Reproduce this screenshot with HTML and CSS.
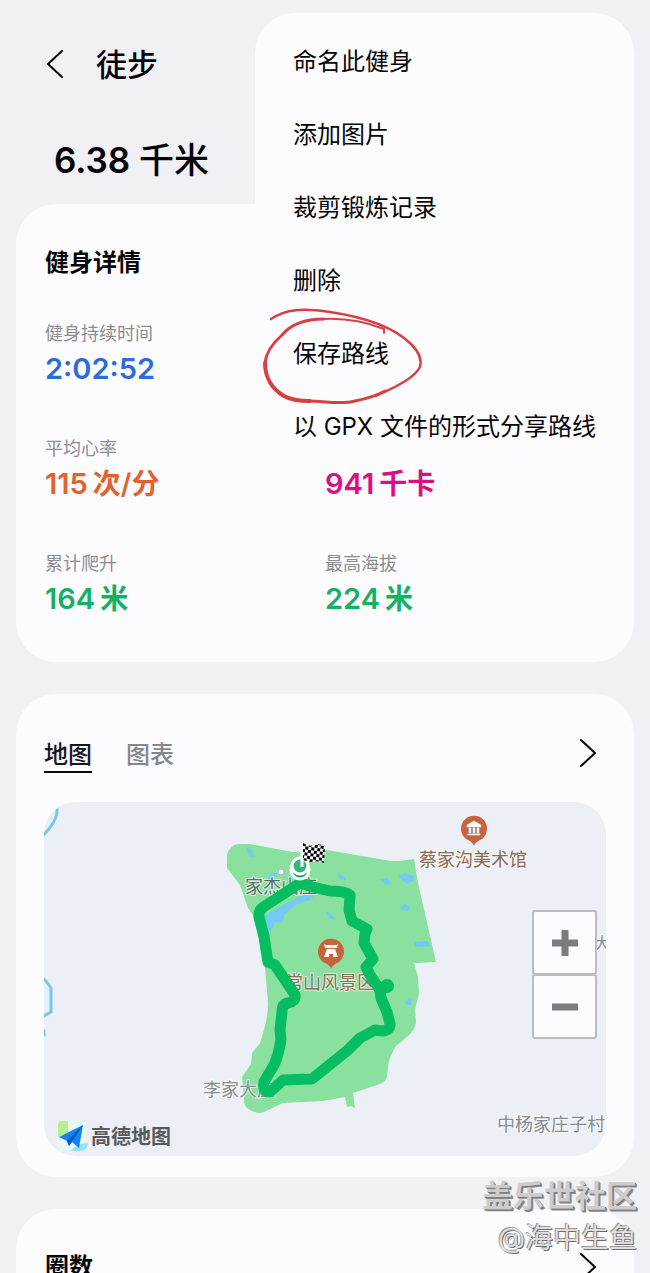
FILE: index.html
```html
<!DOCTYPE html>
<html lang="zh-CN">
<head>
<meta charset="utf-8">
<meta name="viewport" content="width=device-width, initial-scale=1">
<title>徒步</title>
<link rel="stylesheet" href="styles.css">
</head>
<body>
<div class="app">
  <header class="topbar">
    <button class="icon-button" type="button" aria-label="返回">
      <svg class="chevron" viewBox="0 0 18 30" aria-hidden="true"><path d="M16 2 2 15 16 28"/></svg>
    </button>
    <h1 class="title">徒步</h1>
  </header>
  <p class="distance">6.38 <span class="distance-unit">千米</span></p>

  <main class="cards">
    <section class="card details">
      <h2 class="heading">健身详情</h2>
      <dl class="stats">
        <div class="stat stat-wide"><dt>健身持续时间</dt><dd class="blue">2:02:52</dd></div>
        <div class="stat"><dt>平均心率</dt><dd class="orange">115<span class="unit">次/分</span></dd></div>
        <div class="stat"><dt></dt><dd class="pink">941<span class="unit">千卡</span></dd></div>
        <div class="stat"><dt>累计爬升</dt><dd class="green">164<span class="unit">米</span></dd></div>
        <div class="stat"><dt>最高海拔</dt><dd class="green">224<span class="unit">米</span></dd></div>
      </dl>
    </section>

    <section class="card map-card">
      <div class="card-head">
        <div class="tabs">
          <button class="tab tab-active" type="button">地图</button>
          <button class="tab" type="button">图表</button>
        </div>
        <button class="icon-button" type="button" aria-label="打开地图">
          <svg class="chevron" viewBox="0 0 18 30" aria-hidden="true"><path d="M2 2 16 15 2 28"/></svg>
        </button>
      </div>
      <div class="map">
        <svg class="map-canvas" viewBox="44 802 562 354">
          <defs>
            <pattern id="checks" width="6" height="6" patternUnits="userSpaceOnUse" patternTransform="translate(303 843) rotate(8)">
              <rect width="6" height="6" fill="#fff"/><rect width="3" height="3"/><rect x="3" y="3" width="3" height="3"/>
            </pattern>
          </defs>
          <path class="river" d="M40 800H57V812Q56 824 40 838Z"/>
          <path class="river" d="M40 976 46 981 51 988V1012L44 1016H40Z"/>
          <path class="river" d="M42 1031H44V1035H42Z"/>
          <path class="park" d="M227 868V855Q230 845 238 844H250L293 852 327 850 391 861H399L414 859 418 883 436 962 414 963 418 977 419 993 415 1010 416 1022Q415 1030 408 1036L395 1047 389 1060 387 1076Q386 1082 380 1084L353 1093 355 1108 351 1106 347 1107 345 1097 323 1101 283 1103 264 1112Q257 1115 247 1108 243 1104 244 1097L242 1077 251 1064 252 1053 260 1043Q268 1020 268 1003L265 967 253 915 248 908 240 885Z"/>
          <g class="water">
            <path d="M265 915 300 896 315 894 310 900 297 904 285 914 282 923 275 922 271 932 266 926Z"/>
            <path d="M246 847 252 850 255 857 249 856ZM268 877 273 873 277 873 274 878 268 880ZM338 873 346 878 345 881 339 879ZM380 879 387 878 391 883 386 885ZM398 876 405 873 414 876 413 881 407 884 402 880ZM400 907 405 904 410 907 408 911 401 910ZM414 942 427 941 431 946 415 947ZM325 911 331 914 336 920 329 918ZM404 1001 411 999 412 1005 407 1005Z"/>
          </g>
          <g class="places">
            <text class="place-park" x="245" y="893">家杰山庄</text>
            <text class="place-poi" x="285" y="989">常山风景区</text>
            <text class="place" x="203" y="1096">李家大庄</text>
            <text class="place-poi" x="419" y="866">蔡家沟美术馆</text>
            <text class="place" x="497" y="1131">中杨家庄子村</text>
            <text class="place place-small" x="594" y="949">大</text>
          </g>
          <circle cx="281" cy="872" r="3" fill="#fff" stroke="#a9b4cc"/>
          <path class="route" d="M300 883 285 893 265 906Q258 910 259 917L264 936 266 950 268 962 275 965 285 980Q288 984 295 995 296 1001 288 1003 282 1004 282 1012L280 1030 281 1040Q278 1057 274 1065L264 1082Q262 1093 270 1092L283 1080 312 1079 333 1062 348 1050 360 1038 375 1030 383 1031Q390 1030 390 1024L387 1012 381 998 380 990 370 975 366 967 373 959 364 943 365 934 367 929 352 921 349 910 350 895Q345 891 330 891L313 887Z"/>
          <path class="route" d="M380 991 387 986"/>
          <circle cx="387" cy="986" r="7" fill="#06bd61"/>
          <g fill="none" stroke="#fff" stroke-width="3">
            <circle cx="300" cy="870" r="9" fill="#06a95e"/>
            <circle cx="300" cy="866" r="8" fill="#35b77c"/>
          </g>
          <path d="M302 843V867" stroke="#fff" stroke-width="3"/>
          <path d="M303 843Q309 847 314 845 319 843 325 846L324 863Q318 860 313 862 308 862 303 860Z" fill="url(#checks)"/>
          <path class="pin" d="M474 846Q473 842 466 839A13 13 0 1 1 482 839Q475 842 474 846Z"/>
          <path d="M467 825 474 821 481 825V827H467ZM468 834H480V835H467ZM469 828H471V833H469ZM473 828H475V833H473ZM477 828H479V833H477Z" fill="#fff" stroke="#fff" stroke-width=".5"/>
          <path class="pin" d="M331 969Q330 965 323 962A13 13 0 1 1 339 962Q332 965 331 969Z"/>
          <path fill-rule="evenodd" d="M324 944 326 945H336L338 944 337 948H325ZM327 949H335L338 957H333V954H329V957H324Z" fill="#fff"/>
          <g transform="translate(57 1120)">
            <rect width="29" height="30" rx="5" fill="#e8faf6"/>
            <path d="M5 1H11V13L1 17V5Q1 1 5 1Z" fill="#b2f28e"/>
            <path d="M13 31 22 24 31 23Q30 31 23 31Z" fill="#92e3fb"/>
            <path d="M2 17 26 5 22 28 15 22 12 26 10 21Z" fill="#1684ef"/>
            <path d="M10 21 26 5 12 26Z" fill="#0759c3"/>
          </g>
          <text class="brand" x="91" y="1144">高德地图</text>
        </svg>
        <div class="zoom">
          <button class="zoom-button" type="button" aria-label="放大"><svg viewBox="0 0 28 28" aria-hidden="true"><path d="M1 14H27M14 1V27"/></svg></button>
          <button class="zoom-button" type="button" aria-label="缩小"><svg viewBox="0 0 28 28" aria-hidden="true"><path d="M1 14H27"/></svg></button>
        </div>
      </div>
    </section>

    <section class="card laps">
      <div class="card-head">
        <h2 class="heading">圈数</h2>
        <button class="icon-button" type="button" aria-label="打开圈数">
          <svg class="chevron" viewBox="0 0 18 30" aria-hidden="true"><path d="M2 2 16 15 2 28"/></svg>
        </button>
      </div>
    </section>
  </main>

  <nav class="menu" aria-label="更多选项">
    <button class="menu-item" type="button">命名此健身</button>
    <button class="menu-item" type="button">添加图片</button>
    <button class="menu-item" type="button">裁剪锻炼记录</button>
    <button class="menu-item" type="button">删除</button>
    <button class="menu-item" type="button">保存路线
      <svg class="scribble" viewBox="260 305 165 102" aria-hidden="true">
        <path stroke-width="2.5" d="M271 319C286 309 302 308 330 312C370 318 395 328 411 344C420 353 422 360 420 367C415 377 397 387 375 396"/>
        <path stroke-width="2" d="M384 333V329C366 322 346 318 324 319"/>
        <path stroke-width="3" d="M324 319C306 319 291 324 282 335C273 343 266 352 265 363"/>
        <path stroke-width="4" d="M265 363C265 377 272 389 284 396C291 400 298 401 310 401"/>
        <path stroke-width="3" d="M308 401C325 401 341 405 355 401C365 399 374 397 385 391"/>
      </svg>
    </button>
    <button class="menu-item" type="button">以 GPX 文件的形式分享路线</button>
  </nav>

  <div class="watermark">
    <span class="watermark-site">盖乐世社区</span>
    <span class="watermark-user">@海中生鱼</span>
  </div>
</div>
</body>
</html>
```
FILE: styles.css
```css
* { box-sizing: border-box; }

body {
  margin: 0;
  background: #f0f0f5;
  color: #050507;
  font-family: Inter, "Noto Sans CJK SC", sans-serif;
}

h1, h2, p, dl, dd { margin: 0; }

button {
  padding: 0;
  border: 0;
  background: none;
  color: inherit;
  font: inherit;
}

.app {
  position: relative;
  height: 100vh;
  overflow: hidden;
  padding: 0 16px;
}

.topbar {
  display: flex;
  align-items: center;
  gap: 32px;
  padding: 44px 0 0 30px;
}

.icon-button { display: flex; }

.chevron {
  width: 18px;
  height: 30px;
  fill: none;
  stroke: #050507;
  stroke-width: 2;
  stroke-linecap: round;
  stroke-linejoin: round;
}

.title {
  padding-top: 2px;
  font-size: 31px;
  font-weight: 500;
  line-height: 38px;
}

.distance {
  padding: 52px 0 0 38px;
  margin-bottom: 20px;
  font-size: 35px;
  font-weight: 600;
  line-height: 48px;
}

.distance-unit { font-weight: 500; }

.cards {
  display: flex;
  flex-direction: column;
  gap: 32px;
}

.card {
  padding: 0 28px;
  border-radius: 40px;
  background: #fcfcff;
}

.heading {
  font-size: 24px;
  font-weight: 700;
  line-height: 32px;
}

.details { padding: 43px 29px 38px; }

.stats {
  display: grid;
  grid-template-columns: 1fr 1fr;
  gap: 43px 0;
  margin-top: 43px;
}

.stat-wide { grid-column: 1 / -1; }

.stat dt {
  height: 24px;
  color: #8b8b91;
  font-size: 18px;
  line-height: 24px;
}

.stat dd {
  height: 48px;
  font-size: 29px;
  font-weight: 600;
  line-height: 46px;
}

.unit { margin-left: 5px; font-size: 28px; }

.blue { color: #2d6bdc; }
.orange { color: #e2622d; }
.pink { color: #dc0f82; }
.green { color: #12b163; }

.map-card { padding-top: 38px; padding-bottom: 21px; }

.card-head {
  display: flex;
  align-items: center;
  justify-content: space-between;
  padding-right: 9px;
}

.tabs { display: flex; gap: 34px; }

.tab {
  padding: 6px 0 0;
  border-bottom: 2px solid transparent;
  color: #86868c;
  font-size: 24px;
  font-weight: 500;
  line-height: 33px;
}

.tab-active {
  border-color: #0c0c14;
  color: #16161f;
}

.map {
  position: relative;
  margin-top: 29px;
  overflow: hidden;
  border-radius: 32px;
  background: #ecf0f6;
}

.map-canvas { display: block; width: 100%; }

.river { fill: #dff2fd; stroke: #7cc6e0; stroke-width: 3; }
.park { fill: #8ae09f; }
.water { fill: #73c9f4; }
.route {
  fill: none;
  stroke: #06bd61;
  stroke-width: 11;
  stroke-linejoin: round;
  stroke-linecap: round;
}
.pin { fill: #c7643c; }

.places { font-size: 18px; }
.place { fill: #868b91; }
.place-park { fill: #596d69; }
.place-poi { fill: #8b6a52; }
.place-small { font-size: 16px; }
.place-park, .place-poi, .place {
  paint-order: stroke;
  stroke: #ffffffaa;
  stroke-width: 2;
}

.brand { fill: #58595c; font-size: 20px; font-weight: 700; }

.zoom {
  position: absolute;
  top: 108px;
  right: 9px;
  display: flex;
  flex-direction: column;
}

.zoom-button {
  display: grid;
  place-items: center;
  width: 65px;
  height: 65px;
  border: 2px solid #bcbcc0;
  border-radius: 3px;
  background: #fcfcff;
}

.zoom-button + .zoom-button { margin-top: -1px; }

.zoom-button svg {
  width: 28px;
  height: 28px;
  stroke: #7c7c7e;
  stroke-width: 7;
}

.laps { padding-top: 42px; padding-bottom: 42px; }
.laps .heading { padding-left: 1px; }

.menu {
  position: absolute;
  top: 13px;
  right: 16px;
  display: flex;
  flex-direction: column;
  padding-top: 13px;
  border-radius: 40px;
  background: #fcfcff;
}

.menu-item {
  position: relative;
  padding: 20px 38px 21px;
  font-size: 24px;
  line-height: 32px;
  text-align: left;
}

.scribble {
  position: absolute;
  top: -13px;
  left: 5px;
  width: 165px;
  height: 102px;
  fill: none;
  stroke: #d83f45;
  stroke-linecap: round;
  stroke-linejoin: round;
}

.watermark {
  position: absolute;
  right: 13px;
  bottom: 15px;
  display: flex;
  flex-direction: column;
  align-items: flex-end;
  color: #cfcccd;
  text-shadow: 1px 1px 0 #7d7d7d, 2px 2px 0 #8a8a8a, -1px -1px 0 #f4f4f6;
  pointer-events: none;
}

.watermark-site {
  font-size: 31px;
  font-weight: 700;
  line-height: 44px;
}

.watermark-user {
  color: #dededf;
  font-size: 28px;
  line-height: 40px;
  text-shadow: 1px 1px 0 #6c6c6c, -1px -1px 0 #98989b;
}
```
